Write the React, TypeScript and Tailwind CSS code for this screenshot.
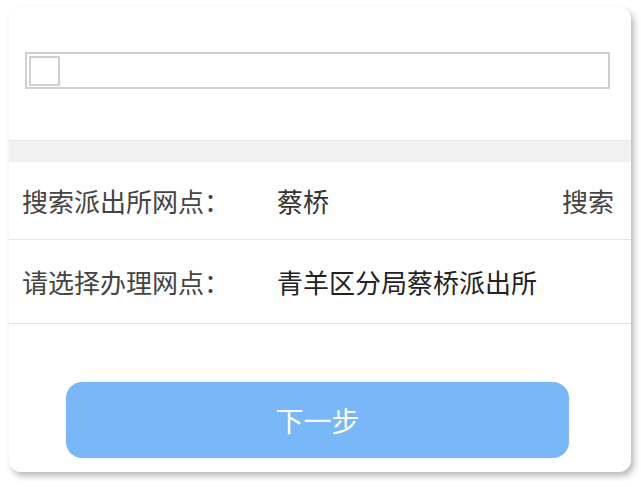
export default function App() {
  return (
    <div
      className="w-[641px] h-[487px] bg-white pl-[9px] pt-[7px]"
      style={{ fontFamily: '"Noto Sans CJK SC", "Noto Sans", sans-serif' }}
    >
      <div className="w-[622px] h-[465px] bg-white rounded-[12px] shadow-[3px_4px_6px_rgba(0,0,0,0.28)] overflow-hidden flex flex-col">
        <div className="h-[133px] shrink-0 pt-[45px] pl-[16px]">
          <div className="w-[585px] h-[37px] border-2 border-[#cfcfcf] flex items-center pl-[2px]">
            <div className="w-[31px] h-[30px] border-2 border-[#cfcfcf]" />
          </div>
        </div>
        <div className="h-[22px] shrink-0 bg-[#f2f2f2] border-t border-[#e8e8e8]" />
        <div className="h-[78px] shrink-0 flex items-center border-b border-[#e6e6e6] pl-[13px] pr-[17px] text-[26px] leading-none">
          <span className="w-[255px] text-[#444]">搜索派出所网点：</span>
          <span className="flex-1 text-[#333]">蔡桥</span>
          <span className="text-[#444]">搜索</span>
        </div>
        <div className="h-[84px] shrink-0 flex items-center border-b border-[#e6e6e6] pl-[13px] text-[26px] leading-none">
          <span className="w-[255px] text-[#444]">请选择办理网点：</span>
          <span className="text-[#222]">青羊区分局蔡桥派出所</span>
        </div>
        <div className="flex-1 flex flex-col justify-end pb-[14px] pl-[57px]">
          <div className="w-[503px] h-[76px] rounded-[16px] bg-[#79b7f8] flex items-center justify-center text-white text-[28px] leading-none">
            下一步
          </div>
        </div>
      </div>
    </div>
  );
}
